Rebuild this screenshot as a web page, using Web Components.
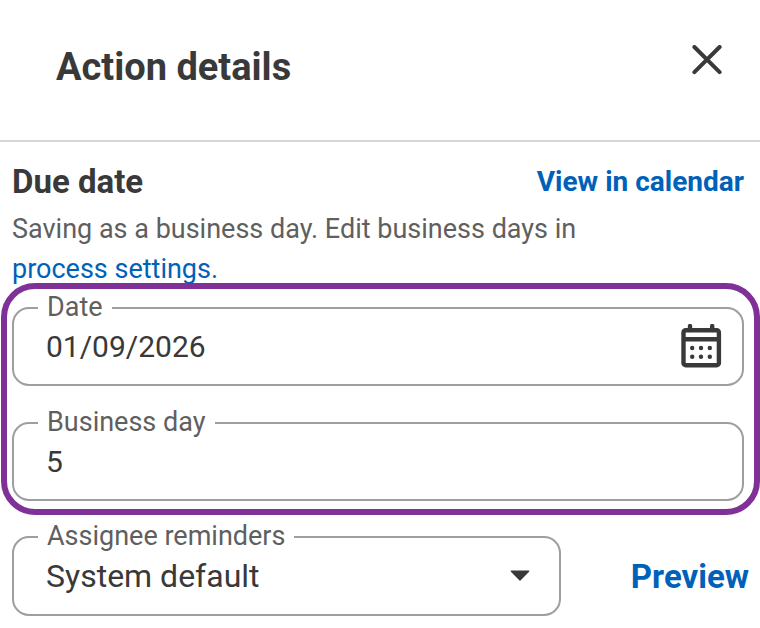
<!DOCTYPE html>
<html lang="en">
<head>
<meta charset="utf-8">
<meta name="viewport" content="width=device-width, initial-scale=1">
<title>Action details</title>
<style>
    body {
        margin: 0;
        background: #fff;
        color: #393939;
        font-family: Roboto, "Liberation Sans", sans-serif;
        --ink: #393939;
        --muted: #5f5f5f;
        --link: #0061b8;
        --line: #9e9e9e;
        --divider: #d6d6d6;
        --highlight: #803197;
    }

    a {
        color: var(--link);
        text-decoration: none;
    }
</style>
</head>
<body>
<action-panel heading="Action details">
    <due-date-section heading="Due date">
        <span slot="hint">Saving as a business day. Edit business days in <a href="#settings">process settings.</a></span>
        <text-field label="Date" value="01/09/2026">
            <icon-button slot="end" icon="calendar" label="Choose date"></icon-button>
        </text-field>
        <text-field label="Business day" value="5"></text-field>
    </due-date-section>
    <reminder-row>
        <select-field label="Assignee reminders" options="System default,None,Custom"></select-field>
        <text-button slot="action">Preview</text-button>
    </reminder-row>
</action-panel>

<script>
const icons = {
    close: {
        size: 30,
        body: `<path d="M2.4 2L27.6 27.2M27.6 2L2.4 27.2" fill="none" stroke="currentColor" stroke-width="4" stroke-linecap="round"/>`
    },
    calendar: {
        size: 44,
        body: `
            <rect x="4.5" y="6.2" width="35.4" height="35" rx="2.2" fill="none" stroke="currentColor" stroke-width="4.4"/>
            <path d="M4.5 15.2H40" stroke="currentColor" stroke-width="4.4"/>
            <path d="M11 6V2M33.2 6V2" stroke="currentColor" stroke-width="4.4" stroke-linecap="round"/>
            <g fill="currentColor">
                <circle cx="13.2" cy="24" r="2.2"/><circle cx="22" cy="24" r="2.2"/><circle cx="30.8" cy="24" r="2.2"/>
                <circle cx="13.2" cy="32.8" r="2.2"/><circle cx="22" cy="32.8" r="2.2"/><circle cx="30.8" cy="32.8" r="2.2"/>
            </g>`
    }
};

// Outlined box whose legend cuts a notch in the top border
const fieldStyles = `
    :host {
        display: block;
    }

    fieldset {
        min-width: 0;
        margin: 0;
        padding: 0 0 16px 24px;
        border: 2px solid var(--line);
        border-radius: 17px;
    }

    legend {
        padding: 0 9px 2px;
        color: var(--muted);
        font-size: 27px;
        line-height: 30px;
    }

    .control {
        display: flex;
        align-items: center;
        height: 44px;
    }
`;

class IconButton extends HTMLElement {
    constructor() {
        super();
        this.attachShadow({ mode: "open" });
    }

    connectedCallback() {
        const icon = icons[this.getAttribute("icon")];
        this.shadowRoot.innerHTML = `
            <style>
                :host {
                    display: block;
                    flex: none;
                }

                button {
                    display: grid;
                    place-items: center;
                    width: 48px;
                    height: 48px;
                    padding: 0;
                    border: 0;
                    background: none;
                    color: var(--ink);
                    cursor: pointer;
                }
            </style>
            <button type="button" aria-label="${this.getAttribute("label")}">
                <svg width="${icon.size}" height="${icon.size}" viewBox="0 0 ${icon.size} ${icon.size}" aria-hidden="true">${icon.body}</svg>
            </button>
        `;
    }
}

customElements.define("icon-button", IconButton);

class TextButton extends HTMLElement {
    constructor() {
        super();
        this.attachShadow({ mode: "open" });
        this.shadowRoot.innerHTML = `
            <style>
                :host {
                    display: block;
                    flex: none;
                }

                button {
                    padding: 0;
                    border: 0;
                    background: none;
                    color: var(--link);
                    font: bold 33px/46px Roboto, "Liberation Sans", sans-serif;
                    cursor: pointer;
                }
            </style>
            <button type="button"><slot></slot></button>
        `;
    }
}

customElements.define("text-button", TextButton);

class TextField extends HTMLElement {
    constructor() {
        super();
        this.attachShadow({ mode: "open" });
    }

    connectedCallback() {
        this.shadowRoot.innerHTML = `
            <style>
                ${fieldStyles}

                .control {
                    padding-right: 17px;
                }

                input {
                    flex: 1;
                    min-width: 0;
                    height: 44px;
                    padding: 0 8px;
                    border: 0;
                    outline: 0;
                    background: none;
                    color: var(--ink);
                    font-family: inherit;
                    font-size: 30px;
                }
            </style>
            <fieldset>
                <legend><label for="input">${this.getAttribute("label")}</label></legend>
                <div class="control">
                    <input id="input" type="text" value="${this.getAttribute("value")}">
                    <slot name="end"></slot>
                </div>
            </fieldset>
        `;
    }
}

customElements.define("text-field", TextField);

class SelectField extends HTMLElement {
    constructor() {
        super();
        this.attachShadow({ mode: "open" });
    }

    connectedCallback() {
        const options = this.getAttribute("options").split(",");
        this.shadowRoot.innerHTML = `
            <style>
                ${fieldStyles}

                .control {
                    display: grid;
                    height: 46px;
                    padding-right: 29px;
                }

                fieldset {
                    padding-bottom: 15px;
                }

                select, svg {
                    grid-area: 1 / 1;
                }

                select {
                    width: 100%;
                    height: 46px;
                    padding: 0 30px 0 8px;
                    border: 0;
                    outline: 0;
                    appearance: none;
                    background: none;
                    color: var(--ink);
                    font-family: inherit;
                    font-size: 32px;
                }

                svg {
                    justify-self: end;
                    pointer-events: none;
                }
            </style>
            <fieldset>
                <legend><label for="select">${this.getAttribute("label")}</label></legend>
                <div class="control">
                    <select id="select">${options.map(text => `<option>${text}</option>`).join("")}</select>
                    <svg width="20" height="12" viewBox="0 0 20 12" aria-hidden="true">
                        <path d="M1.4 1.2H18.6L10 10Z" fill="#393939" stroke="#393939" stroke-width="1.4" stroke-linejoin="round"/>
                    </svg>
                </div>
            </fieldset>
        `;
    }
}

customElements.define("select-field", SelectField);

class DueDateSection extends HTMLElement {
    constructor() {
        super();
        this.attachShadow({ mode: "open" });
    }

    connectedCallback() {
        this.shadowRoot.innerHTML = `
            <style>
                :host {
                    display: block;
                    padding-top: 20px;
                }

                .top {
                    display: flex;
                    justify-content: space-between;
                    align-items: center;
                    padding: 0 16px 0 12px;
                    line-height: 40px;
                }

                h3 {
                    margin: 0;
                    font-size: 33px;
                }

                .top a {
                    color: var(--link);
                    font-size: 28px;
                    font-weight: bold;
                    text-decoration: none;
                }

                p {
                    margin: 0;
                    padding: 7px 160px 0 12px;
                    color: var(--muted);
                    font-size: 27px;
                    line-height: 40px;
                }

                .fields {
                    display: grid;
                    gap: 21px;
                    margin: -6px 0 0 1px;
                    padding: 3px 10px 8px 5px;
                    border: 6px solid var(--highlight);
                    border-radius: 34px;
                }
            </style>
            <div class="top">
                <h3>${this.getAttribute("heading")}</h3>
                <a href="#calendar">View in calendar</a>
            </div>
            <p><slot name="hint"></slot></p>
            <div class="fields"><slot></slot></div>
        `;
    }
}

customElements.define("due-date-section", DueDateSection);

class ReminderRow extends HTMLElement {
    constructor() {
        super();
        this.attachShadow({ mode: "open" });
        this.shadowRoot.innerHTML = `
            <style>
                :host {
                    display: flex;
                    align-items: flex-end;
                    gap: 70px;
                    padding: 6px 11px 12px 12px;
                }

                .field {
                    flex: 1;
                    min-width: 0;
                }

                .action {
                    padding-bottom: 16px;
                }
            </style>
            <div class="field"><slot></slot></div>
            <div class="action"><slot name="action"></slot></div>
        `;
    }
}

customElements.define("reminder-row", ReminderRow);

class ActionPanel extends HTMLElement {
    constructor() {
        super();
        this.attachShadow({ mode: "open" });
    }

    connectedCallback() {
        this.shadowRoot.innerHTML = `
            <style>
                :host {
                    display: block;
                }

                header {
                    display: flex;
                    justify-content: space-between;
                    align-items: flex-start;
                    padding: 36px 29px 42px 56px;
                    border-bottom: 2px solid var(--divider);
                }

                h2 {
                    margin: 0;
                    font-size: 38px;
                    line-height: 62px;
                }
            </style>
            <header>
                <h2>${this.getAttribute("heading")}</h2>
                <icon-button icon="close" label="Close"></icon-button>
            </header>
            <main><slot></slot></main>
        `;
    }
}

customElements.define("action-panel", ActionPanel);
</script>
</body>
</html>
